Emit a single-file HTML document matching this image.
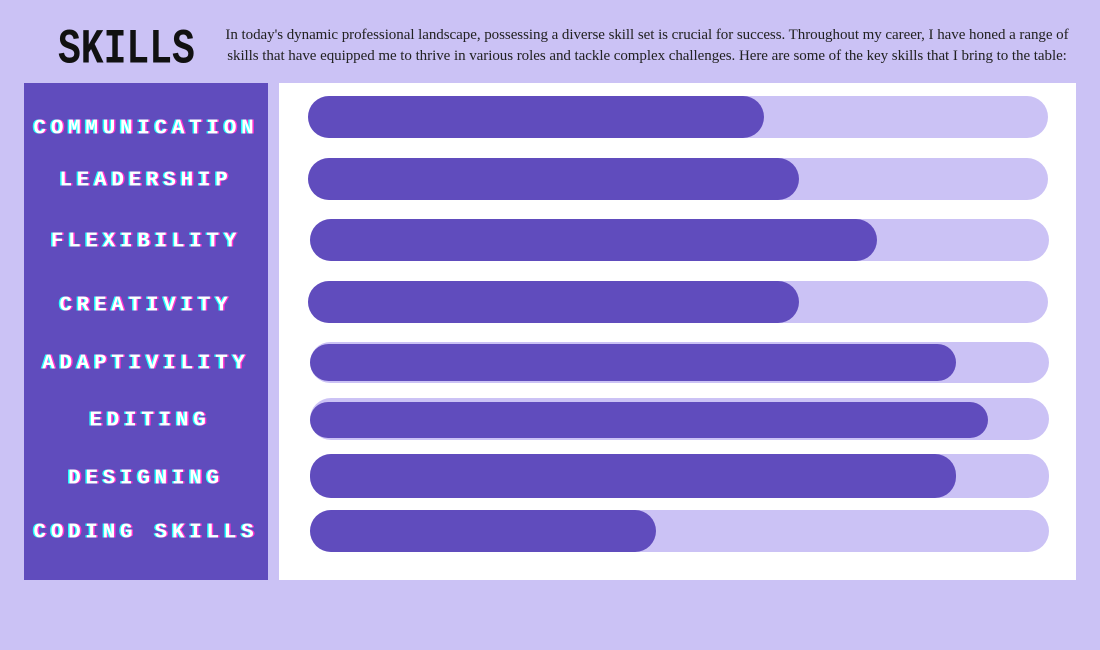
<!DOCTYPE html>
<html><head><style>
body{margin:0;width:1100px;height:650px;background:#cbc2f5;position:relative;overflow:hidden;font-family:"Liberation Serif",serif}
.title{position:absolute;left:58px;top:22px;font:bold 38px "Liberation Mono",monospace;color:#111;transform:scaleY(1.3);transform-origin:top left;letter-spacing:0px}
.para{position:absolute;left:214px;top:25px;width:866px;text-align:center;font-size:15px;line-height:21px;color:#222;letter-spacing:-0.05px;white-space:nowrap}
.left{position:absolute;left:24px;top:83px;width:244px;height:497px;background:#604cbd}
.right{position:absolute;left:279px;top:83px;width:797px;height:497px;background:#fff}
.lab{position:absolute;left:24px;width:244px;text-align:center;font:bold 21px "Liberation Mono",monospace;color:#fff;letter-spacing:4.7px;text-shadow:-1.5px 0 #2ff,1.5px 0 #f3c;transform:translateY(-50%);margin-top:2px}
.track{position:absolute;background:#cbc2f5;border-radius:21px}
.fill{position:absolute;left:0;top:0;bottom:0;background:#604cbd;border-radius:21px}
</style></head><body>
<div class="title">SKILLS</div>
<div class="para">In today's dynamic professional landscape, possessing a diverse skill set is crucial for success. Throughout my career, I have honed a range of<br>skills that have equipped me to thrive in various roles and tackle complex challenges. Here are some of the key skills that I bring to the table:</div>
<div class="left"></div><div class="right"></div>
<div class="lab" style="top:127px">COMMUNICATION</div>
<div class="lab" style="top:179px">LEADERSHIP</div>
<div class="lab" style="top:240px">FLEXIBILITY</div>
<div class="lab" style="top:304px">CREATIVITY</div>
<div class="lab" style="top:362px">ADAPTIVILITY</div>
<div class="lab" style="top:419px;left:28px">EDITING</div>
<div class="lab" style="top:477px">DESIGNING</div>
<div class="lab" style="top:531px">CODING SKILLS</div>
<div class="track" style="left:308px;top:96px;width:740px;height:42px"><div class="fill" style="width:456px"></div></div>
<div class="track" style="left:308px;top:158px;width:740px;height:42px"><div class="fill" style="width:491px"></div></div>
<div class="track" style="left:310px;top:219px;width:739px;height:42px"><div class="fill" style="width:567px"></div></div>
<div class="track" style="left:308px;top:281px;width:740px;height:42px"><div class="fill" style="width:491px"></div></div>
<div class="track" style="left:310px;top:342px;width:739px;height:41px"><div class="fill" style="width:646px;top:2px;bottom:2px"></div></div>
<div class="track" style="left:310px;top:398px;width:739px;height:42px"><div class="fill" style="width:678px;top:4px;bottom:2px"></div></div>
<div class="track" style="left:310px;top:454px;width:739px;height:44px"><div class="fill" style="width:646px"></div></div>
<div class="track" style="left:310px;top:510px;width:739px;height:42px"><div class="fill" style="width:346px"></div></div>
</body></html>
